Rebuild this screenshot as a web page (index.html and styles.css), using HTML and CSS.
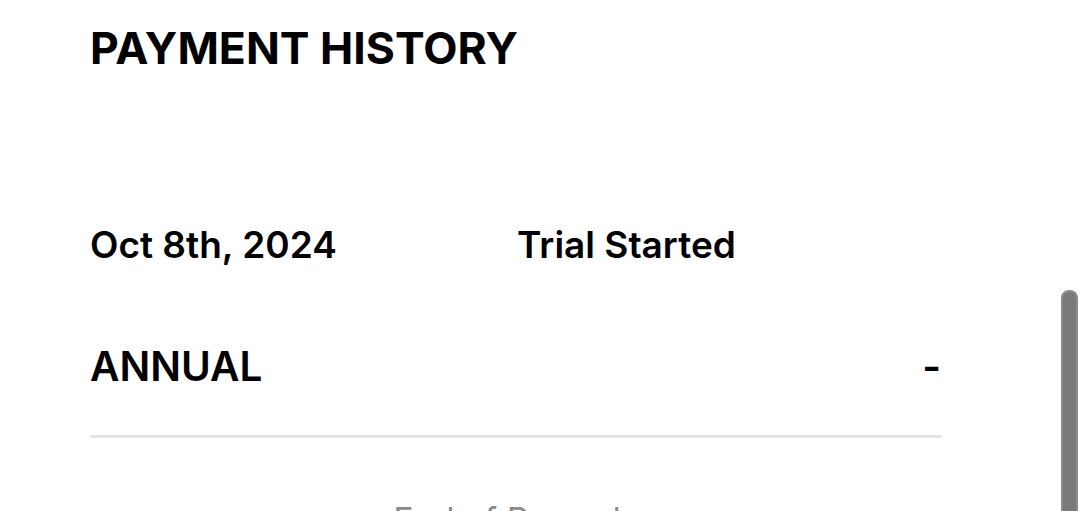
FILE: index.html
```html
<!DOCTYPE html>
<html lang="en">
<head>
    <meta charset="UTF-8">
    <meta name="viewport" content="width=device-width, initial-scale=1.0">
    <title>Payment History</title>
    <link rel="stylesheet" href="styles.css">
</head>
<body>
    <div class="history">
        <h1 class="history-title">PAYMENT HISTORY</h1>

        <div class="history-row">
            <span class="history-date">Oct 8th, 2024</span>
            <span class="history-event">Trial Started</span>
        </div>

        <div class="history-plan">
            <span class="plan-name">ANNUAL</span>
            <span class="plan-amount">-</span>
        </div>

        <div class="history-end">End of Records</div>
    </div>

    <div class="scroll-thumb"></div>
</body>
</html>
```

FILE: styles.css
```css
* {
    margin: 0;
    padding: 0;
    box-sizing: border-box;
}

html, body {
    height: 100%;
    overflow: hidden;
}

body {
    font-family: Inter, 'Noto Sans', sans-serif;
    background: #ffffff;
    color: #000000;
    position: relative;
}

.history {
    width: 852px;
    margin-left: 90px;
    padding-top: 20px;
}

.history-title {
    font-size: 44.5px;
    font-weight: 700;
    line-height: 56px;
    letter-spacing: 0;
}

.history-row {
    display: flex;
    align-items: center;
    margin-top: 146px;
    height: 44px;
}

.history-date {
    width: 427px;
    font-size: 37px;
    font-weight: 600;
}

.history-event {
    font-size: 37px;
    font-weight: 600;
}

.history-plan {
    display: flex;
    justify-content: space-between;
    align-items: center;
    margin-top: 78px;
    height: 44px;
}

.plan-name {
    font-size: 40.5px;
    font-weight: 600;
}

.plan-amount {
    font-size: 40.5px;
    font-weight: 600;
    padding-right: 1px;
}

.history-end {
    border-top: 3px solid #e5e5e5;
    margin-top: 47px;
    padding-top: 61px;
    text-align: center;
    font-size: 34px;
    color: #8a8a8a;
}

.scroll-thumb {
    position: absolute;
    right: 2px;
    top: 290px;
    width: 17px;
    height: 260px;
    background: #7a7a7a;
    border: 2px solid #8c8c8c;
    border-radius: 8px;
}
```
